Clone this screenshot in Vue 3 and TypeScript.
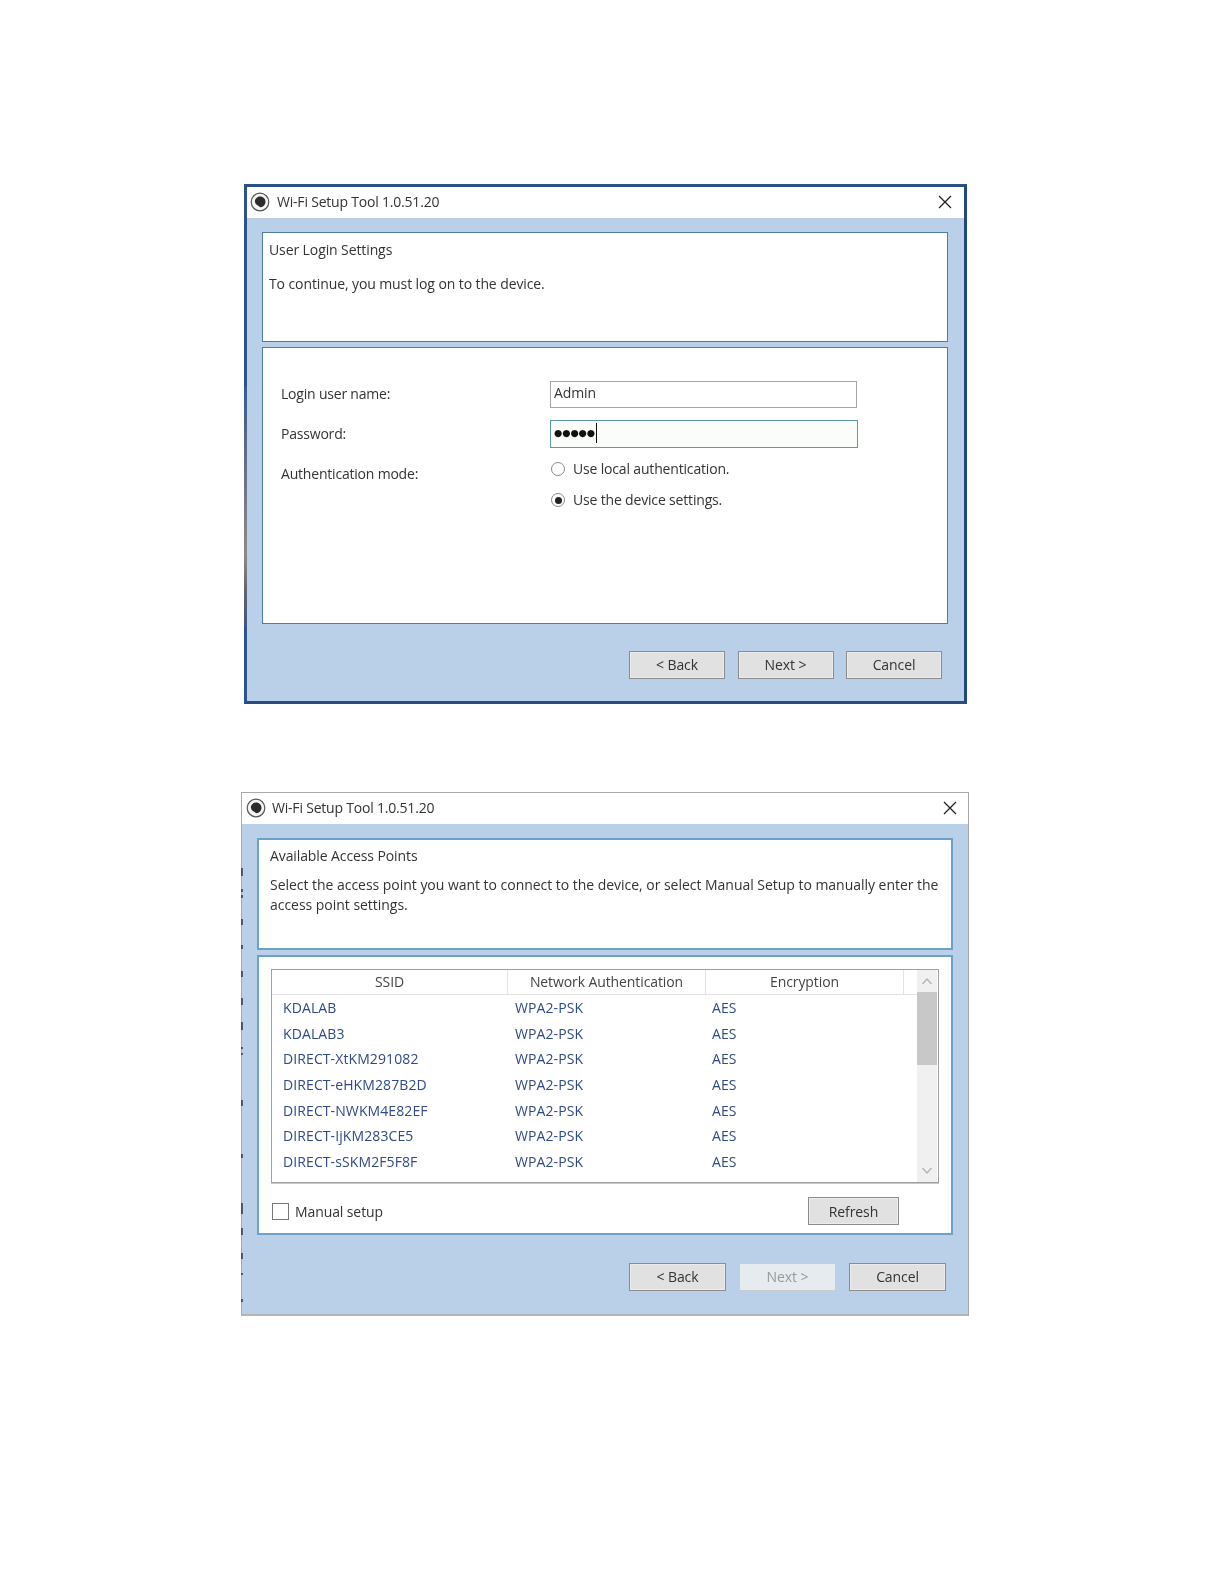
<script setup lang="ts">
const rows = [
  'KDALAB',
  'KDALAB3',
  'DIRECT-XtKM291082',
  'DIRECT-eHKM287B2D',
  'DIRECT-NWKM4E82EF',
  'DIRECT-IjKM283CE5',
  'DIRECT-sSKM2F5F8F',
]

// Dark specks left on the edge of the second window by the screenshot it was cropped from.
const specks: { top: number; h: number }[] = [
  { top: 75, h: 8 }, { top: 96, h: 3 }, { top: 102, h: 3 }, { top: 126, h: 6 },
  { top: 152, h: 4 }, { top: 178, h: 6 }, { top: 205, h: 7 }, { top: 229, h: 8 },
  { top: 254, h: 2 }, { top: 260, h: 2 }, { top: 307, h: 6 }, { top: 361, h: 4 },
  { top: 410, h: 11 }, { top: 435, h: 7 }, { top: 460, h: 6 }, { top: 480, h: 2 },
  { top: 506, h: 3 },
]
</script>

<template>
  <div class="page">
    <section class="win win-a">
      <i class="edge"></i>
      <header class="title">
        <svg class="logo" width="20" height="20" viewBox="0 0 20 20">
          <circle cx="10" cy="10" r="8.8" fill="#f4f4f4" stroke="#555" stroke-width="1.2" />
          <path d="M4.8 9.500C5 6.500 7.500 4.500 10.200 4.500c3 0 5.300 2.300 5.300 5.300 0 3-2.300 5.400-5 5.400-1 0-1.200-1-2.200-1.500-1.500-.7-3.400-1.800-3.300-4.200z" fill="#2b2b2b" />
        </svg>
        <span class="title-text">Wi-Fi Setup Tool 1.0.51.20</span>
        <svg class="close" width="14" height="14" viewBox="0 0 14 14">
          <path d="M1 1l12 12M13 1L1 13" stroke="#222" stroke-width="1.3" fill="none" />
        </svg>
      </header>
      <div class="body body-a">
        <div class="panel intro-a">
          <p class="heading">User Login Settings</p>
          <p class="desc">To continue, you must log on to the device.</p>
        </div>
        <div class="panel form">
          <div class="form-labels">
            <span>Login user name:</span>
            <span>Password:</span>
            <span>Authentication mode:</span>
          </div>
          <div class="form-fields">
            <div class="input">Admin</div>
            <div class="input focus"><span class="dots">●●●●●</span><i class="caret"></i></div>
            <label class="radio first"><span class="dot"></span>Use local authentication.</label>
            <label class="radio"><span class="dot on"></span>Use the device settings.</label>
          </div>
        </div>
        <footer class="actions actions-a">
          <button class="btn">&lt; Back</button>
          <button class="btn">Next &gt;</button>
          <button class="btn">Cancel</button>
        </footer>
      </div>
    </section>

    <section class="win win-b">
      <i v-for="s in specks" :key="s.top" class="speck" :style="{ top: s.top + 'px', height: s.h + 'px' }"></i>
      <header class="title">
        <svg class="logo" width="20" height="20" viewBox="0 0 20 20">
          <circle cx="10" cy="10" r="8.8" fill="#f4f4f4" stroke="#555" stroke-width="1.2" />
          <path d="M4.8 9.500C5 6.500 7.500 4.500 10.200 4.500c3 0 5.300 2.300 5.300 5.300 0 3-2.300 5.400-5 5.400-1 0-1.200-1-2.200-1.500-1.500-.7-3.400-1.800-3.300-4.200z" fill="#2b2b2b" />
        </svg>
        <span class="title-text">Wi-Fi Setup Tool 1.0.51.20</span>
        <svg class="close" width="14" height="14" viewBox="0 0 14 14">
          <path d="M1 1l12 12M13 1L1 13" stroke="#222" stroke-width="1.3" fill="none" />
        </svg>
      </header>
      <div class="body body-b">
        <div class="panel intro-b">
          <p class="heading">Available Access Points</p>
          <p class="desc">Select the access point you want to connect to the device, or select Manual Setup to manually enter the access point settings.</p>
        </div>
        <div class="panel list-panel">
          <div class="table">
            <div class="table-main">
              <div class="thead">
                <span class="col-1">SSID</span>
                <span class="col-2">Network Authentication</span>
                <span class="col-3">Encryption</span>
              </div>
              <div v-for="r in rows" :key="r" class="row">
                <span class="cell-1">{{ r }}</span>
                <span class="cell-2">WPA2-PSK</span>
                <span class="cell-3">AES</span>
              </div>
            </div>
            <div class="scroll">
              <svg width="20" height="22" viewBox="0 0 20 22"><path d="M5.500 14l4.500-5 4.500 5" fill="none" stroke="#b4b4b4" stroke-width="1.4" /></svg>
              <div class="thumb"></div>
              <div class="track"></div>
              <svg width="20" height="22" viewBox="0 0 20 22"><path d="M5.500 8l4.500 5 4.500-5" fill="none" stroke="#b4b4b4" stroke-width="1.4" /></svg>
            </div>
          </div>
          <div class="tools">
            <label class="check"><span class="box"></span>Manual setup</label>
            <button class="btn refresh">Refresh</button>
          </div>
        </div>
        <footer class="actions actions-b">
          <button class="btn">&lt; Back</button>
          <button class="btn disabled">Next &gt;</button>
          <button class="btn">Cancel</button>
        </footer>
      </div>
    </section>
  </div>
</template>

<style>
html, body { background: #fff; }
</style>

<style scoped>
.page {
  width: 1224px;
  height: 1584px;
  padding-top: 184px;
  box-sizing: border-box;
  background: #fff;
  font-family: "Open Sans", "Noto Sans", sans-serif;
  font-size: 14px;
  letter-spacing: -0.1px;
  color: #333;
  overflow: hidden;
  filter: blur(0.35px);
}
p { margin: 0; }
.win { position: relative; display: flex; flex-direction: column; box-sizing: border-box; background: #b9d0e8; }
.win-a {
  width: 723px; height: 520px; margin-left: 244px;
  border: 3px solid #24477f;
  border-top-color: #2b5089;
  border-bottom-color: #2a4c84;
  border-left-color: #2d5489;
}
.edge {
  position: absolute; left: -3px; top: 200px; width: 3px; height: 240px;
  background: linear-gradient(#3a5c8f, #6f7389 40%, #8e8a86 70%, #66636f 85%, #3f5583);
}
.win-b {
  width: 728px; height: 524px; margin-left: 241px; margin-top: 88px;
  border: 1px solid #a8a8a8;
  border-bottom: 2px solid #b4b4b4;
}
.speck { position: absolute; left: -1px; width: 2px; background: #2c2a38; opacity: 0.7; }
.title {
  height: 31px; flex: none; background: #fff; display: flex; align-items: center; color: #333; padding-bottom: 2px; box-sizing: border-box;
}
.win-a .title { padding-left: 3px; padding-right: 12px; }
.win-b .title { padding-left: 4px; padding-right: 11px; height: 31px; }
.logo { flex: none; }
.title-text { margin-left: 7px; font-size: 14px; flex: 1; letter-spacing: -0.2px; }
.win-b .title-text { margin-left: 6px; }
.close { margin-top: 1px; }
.body { flex: 1; display: flex; flex-direction: column; }
.body-a { padding: 14px 16px 0 15px; }
.body-b { padding: 14px 15px 0 15px; }
.panel { box-sizing: border-box; background: #fff; border: 1px solid #4f7ba6; }
.intro-a { height: 110px; padding: 7px 6px; }
.intro-a .desc { margin-top: 14px; }
.intro-b { height: 112px; padding: 6px 11px; border: 2px solid #6ea1ca; }
.intro-b .desc { margin-top: 9px; width: 676px; letter-spacing: -0.03px; }
.heading, .desc { line-height: 20px; }
.form {
  height: 277px; margin-top: 5px; display: flex;
}
.form-labels {
  width: 287px; flex: none; padding: 36px 0 0 18px; box-sizing: border-box;
  display: flex; flex-direction: column; gap: 20px; letter-spacing: -0.2px;
}
.form-labels span { line-height: 20px; }
.form-fields { display: flex; flex-direction: column; padding-top: 33px; }
.input {
  box-sizing: border-box; width: 307px; height: 27px; border: 1px solid #a6a6a6;
  padding: 0 3px 5px; display: flex; align-items: center; background: #fff;
}
.input.focus {
  width: 308px; height: 28px; margin-top: 12px; border-color: #5d9aa6; background: #fbfdfb; padding-bottom: 3px;
}
.dots { font-size: 9.5px; letter-spacing: -0.1px; color: #111; font-family: "DejaVu Sans", sans-serif; }
.caret { display: inline-block; width: 1px; height: 20px; background: #111; margin-left: 1px; }
.radio { display: flex; align-items: center; line-height: 20px; padding-left: 1px; letter-spacing: -0.17px; }
.radio.first { margin-top: 11px; }
.radio + .radio { margin-top: 11px; }
.dot {
  width: 14px; height: 14px; box-sizing: border-box; border: 1px solid #8a8a8a; border-radius: 50%;
  margin-right: 8px; background: #fff; flex: none; position: relative;
}
.dot.on::after {
  content: ""; position: absolute; inset: 2.5px; border-radius: 50%; background: #222;
}
.actions { display: flex; }
.actions-a { margin-top: 27px; gap: 12.5px; padding-left: 367px; }
.actions-b { margin-top: 28px; gap: 13px; padding-left: 372px; }
.btn {
  box-sizing: border-box; width: 96px; height: 28px; border: 1px solid #8c8c8c; background: #e1e1e1;
  font: inherit; color: #333; padding: 0 0 2px; box-shadow: inset 0 0 0 1px #ececec; letter-spacing: -0.1px;
}
.actions-b .btn { width: 97px; }
.btn.disabled { background: #e6ebef; border-color: #c8ccd0; color: #9a9a9a; box-shadow: none; }
.list-panel {
  height: 280px; margin-top: 5px; border: 2px solid #6ea1ca;
  padding: 12px 12px 0; display: flex; flex-direction: column;
}
.table {
  box-sizing: border-box; height: 214px; border: 1px solid #a0a0a0; display: flex; box-shadow: 0 1px 0 #c8c8c8;
}
.table-main { flex: 1; min-width: 0; }
.thead {
  height: 25px; display: flex; box-sizing: border-box; border-bottom: 1px solid #e3e3e3; line-height: 24px; color: #444;
}
.thead span { text-align: center; box-sizing: border-box; border-right: 1px solid #e3e3e3; }
.col-1 { width: 236px; }
.col-2 { width: 198px; }
.col-3 { width: 198px; }
.row { height: 25.6px; display: flex; align-items: center; color: #2f4a86; letter-spacing: 0.1px; }
.cell-1 { padding-left: 11px; box-sizing: border-box; width: 243px; }
.cell-2 { width: 197px; }
.scroll { width: 20px; margin-right: 1px; flex: none; display: flex; flex-direction: column; background: #f0f0f0; }
.scroll svg { flex: none; display: block; }
.thumb { height: 73px; background: #c8c8c8; flex: none; }
.track { flex: 1; }
.tools { display: flex; align-items: center; justify-content: space-between; padding: 14px 40px 0 1px; }
.check { display: flex; align-items: center; }
.box {
  width: 17px; height: 17px; box-sizing: border-box; border: 1px solid #777; background: #fff; margin-right: 6px;
}
.btn.refresh { width: 91px; padding: 0; }
</style>
